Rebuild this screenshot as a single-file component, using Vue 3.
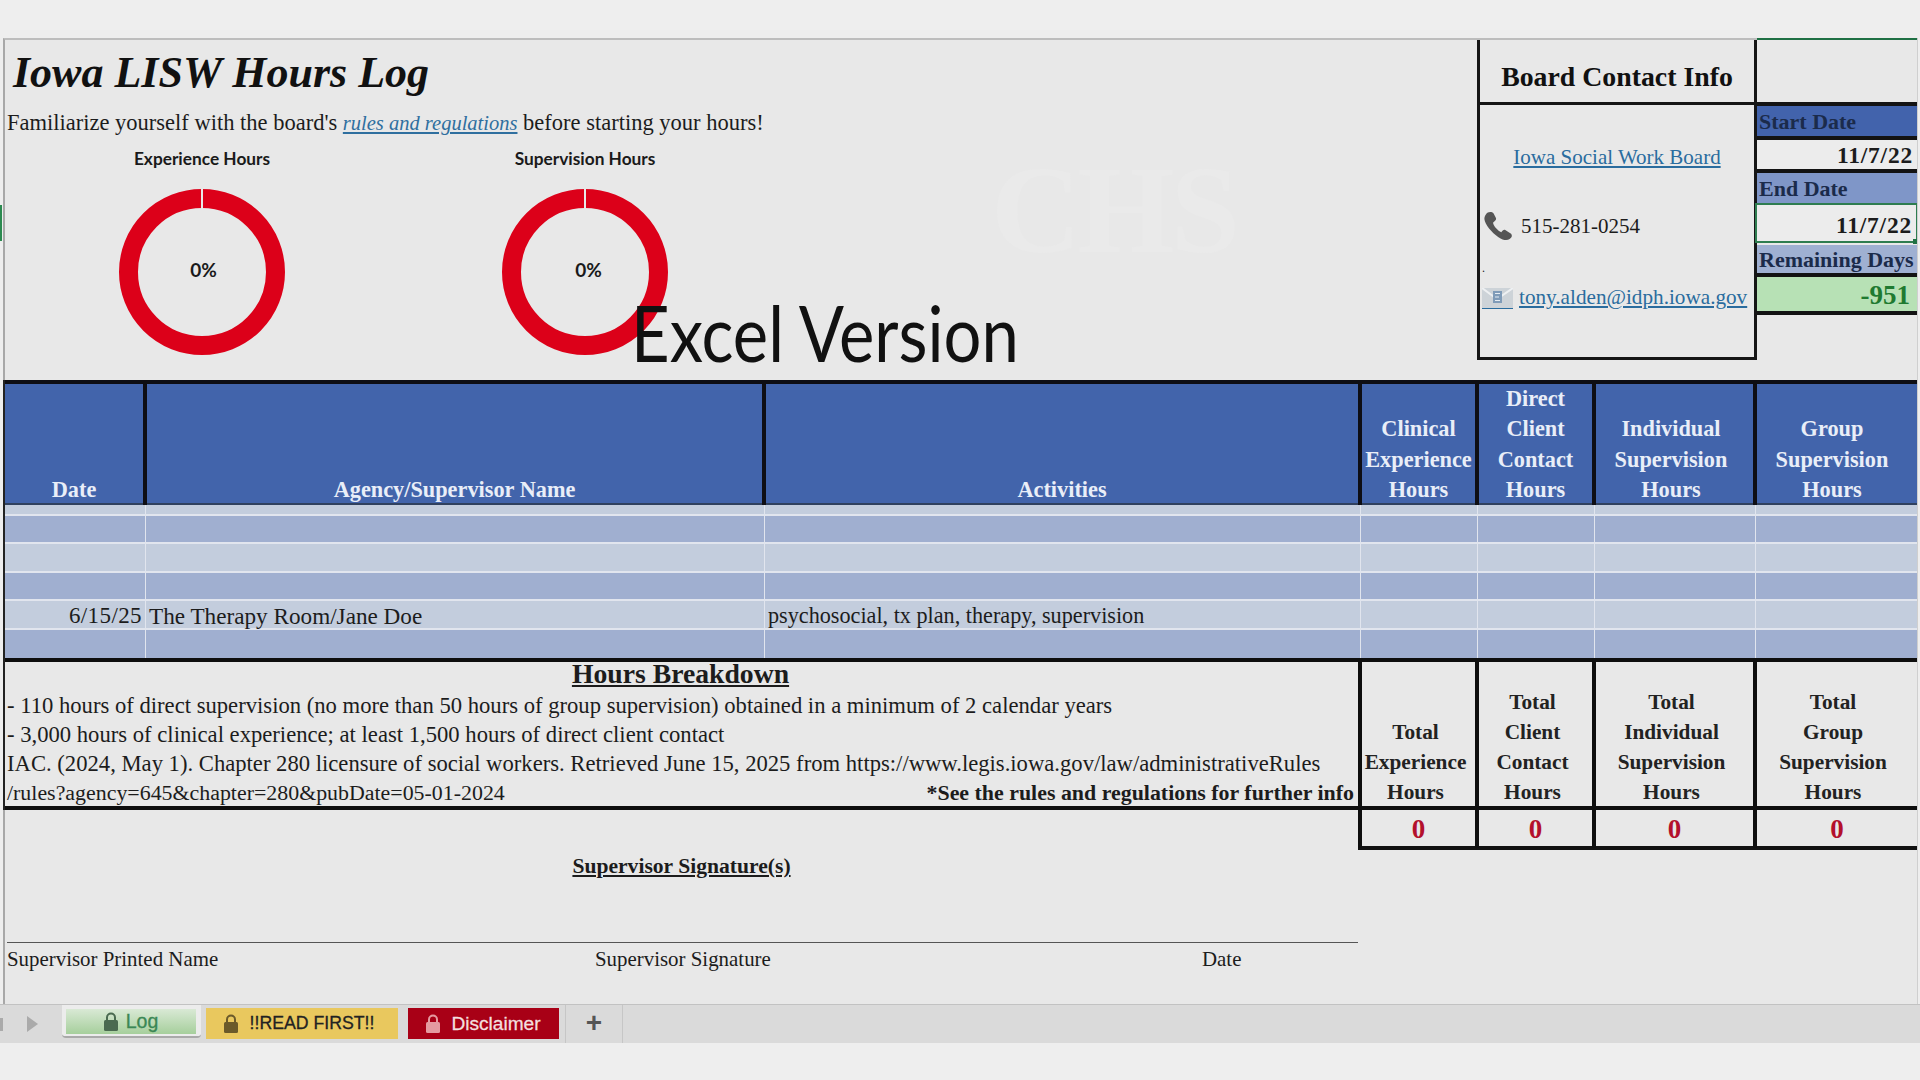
<template>
  <div class="page">
    <div class="top-strip"></div>
    <div class="row-marker"></div>

    <div class="sheet">
      <div class="excel-label">Excel Version</div>
      <div class="watermark">CHS</div>

      <!-- top part: title, charts, contact box, dates -->
      <div class="top-section">
        <div class="intro">
          <h1 class="title">Iowa LISW Hours Log</h1>
          <p class="subtitle">
            Familiarize yourself with the board's
            <a class="rules-link">rules and regulations</a>
            before starting your hours!
          </p>
          <div class="charts">
            <div v-for="chart in charts" :key="chart" class="chart">
              <div class="chart-title">{{ chart }}</div>
              <div class="donut">
                <svg width="170" height="170" viewBox="0 0 170 170">
                  <circle cx="85" cy="85" r="73.5" fill="none" stroke="#dc0019" stroke-width="19" />
                  <rect x="84" y="0" width="2" height="24" fill="#e8e8e8" />
                </svg>
                <span class="donut-value">0%</span>
              </div>
            </div>
          </div>
        </div>

        <div class="contact">
          <div class="contact-head">Board Contact Info</div>
          <div class="contact-body">
            <a class="link board-link">Iowa Social Work Board</a>
            <div class="phone-row">
              <svg class="phone-icon" width="31" height="32" viewBox="0 0 32 32">
                <path fill="#555" d="M4 4C6 1 10 1 12 3L14.5 8C15 10 13 11 11.5 12.500C11 15 16 21 20 22.500C21 20.500 22.500 19.500 24 20L30 24C31.500 25.500 31 28 28.500 29.500C26 31 22 31 17 27.500C10 23 3 14 2.500 9C2.300 7 3 5.500 4 4Z" />
              </svg>
              <span>515-281-0254</span>
            </div>
            <div class="dot-row">.</div>
            <div class="mail-row">
              <svg class="mail-icon" width="31" height="20" viewBox="0 0 31 20">
                <rect x="0" y="0" width="31" height="20" fill="#cdd3d8" />
                <path d="M0 0L15 11L31 0" fill="none" stroke="#eef0f2" stroke-width="2" />
                <rect x="11" y="3" width="9" height="12" fill="#7f9bb8" />
                <path d="M13 5.500H18M13 9H17M13 12.500H18" stroke="#e6edf3" stroke-width="1.200" />
              </svg>
              <a class="link">tony.alden@idph.iowa.gov</a>
            </div>
          </div>
        </div>

        <div class="dates">
          <div class="band band-start">Start Date</div>
          <div class="date-cell">11/7/22</div>
          <div class="band band-end">End Date</div>
          <div class="date-cell date-selected">
            11/7/22
            <span class="fill-handle"></span>
          </div>
          <div class="band band-left">Remaining Days</div>
          <div class="date-cell date-left">-951</div>
        </div>
      </div>

      <!-- log table -->
      <div class="log">
        <div class="log-head">
          <div v-for="col in columns" :key="col.join()" class="head-cell">
            <span v-for="line in col" :key="line">{{ line }}</span>
          </div>
        </div>

        <div v-for="(row, i) in rows" :key="i" class="log-row" :class="row.cls">
          <div class="cell cell-date">{{ row.date }}</div>
          <div class="cell cell-agency">{{ row.agency }}</div>
          <div class="cell">{{ row.activities }}</div>
          <div class="cell"></div>
          <div class="cell"></div>
          <div class="cell"></div>
          <div class="cell"></div>
        </div>

        <div class="breakdown">
          <div class="breakdown-text">
            <div class="breakdown-head">Hours Breakdown</div>
            <div class="line">- 110 hours of direct supervision (no more than 50 hours of group supervision) obtained in a minimum of 2 calendar years</div>
            <div class="line">- 3,000 hours of clinical experience; at least 1,500 hours of direct client contact</div>
            <div class="line">IAC. (2024, May 1). Chapter 280 licensure of social workers. Retrieved June 15, 2025 from https://www.legis.iowa.gov/law/administrativeRules</div>
            <div class="line line-split">
              <span>/rules?agency=645&amp;chapter=280&amp;pubDate=05-01-2024</span>
              <b>*See the rules and regulations for further info</b>
            </div>
          </div>
          <div v-for="col in totals" :key="col.join()" class="total-head">
            <span v-for="line in col" :key="line">{{ line }}</span>
          </div>
        </div>

        <div class="lower">
          <div class="signature">
            <div class="signature-head">Supervisor Signature(s)</div>
            <div class="signature-labels">
              <span>Supervisor Printed Name</span>
              <span>Supervisor Signature</span>
              <span>Date</span>
            </div>
          </div>
          <div class="total-values">
            <div v-for="col in totals" :key="col.join()" class="total-value">0</div>
          </div>
        </div>
      </div>
    </div>

    <div class="tabbar">
      <div class="tab-nav">
        <span class="nav-prev"></span>
        <span class="nav-next"></span>
      </div>
      <div class="tab-active">
        <div class="tab tab-log">
          <svg class="lock" width="14" height="19" viewBox="0 0 14 19">
            <path d="M3 8V5.500a4 4 0 0 1 8 0V8" fill="none" stroke="currentColor" stroke-width="2" />
            <rect x="0" y="8" width="14" height="11" rx="1.500" fill="currentColor" />
          </svg>
          <span>Log</span>
        </div>
      </div>
      <div class="tab tab-read">
        <svg class="lock" width="14" height="19" viewBox="0 0 14 19">
          <path d="M3 8V5.500a4 4 0 0 1 8 0V8" fill="none" stroke="currentColor" stroke-width="2" />
          <rect x="0" y="8" width="14" height="11" rx="1.500" fill="currentColor" />
        </svg>
        <span>!!READ FIRST!!</span>
      </div>
      <div class="tab tab-disclaimer">
        <svg class="lock" width="14" height="19" viewBox="0 0 14 19">
          <path d="M3 8V5.500a4 4 0 0 1 8 0V8" fill="none" stroke="currentColor" stroke-width="2" />
          <rect x="0" y="8" width="14" height="11" rx="1.500" fill="currentColor" />
        </svg>
        <span>Disclaimer</span>
      </div>
      <div class="tab-add">+</div>
    </div>
  </div>
</template>

<script setup>
const charts = ['Experience Hours', 'Supervision Hours']

const columns = [
  ['Date'],
  ['Agency/Supervisor Name'],
  ['Activities'],
  ['Clinical', 'Experience', 'Hours'],
  ['Direct', 'Client', 'Contact', 'Hours'],
  ['Individual', 'Supervision', 'Hours'],
  ['Group', 'Supervision', 'Hours']
]

const rows = [
  { cls: 'row-first' },
  { cls: 'row-dark' },
  { cls: 'row-light' },
  { cls: 'row-dark' },
  {
    cls: 'row-light',
    date: '6/15/25',
    agency: 'The Therapy Room/Jane Doe',
    activities: 'psychosocial, tx plan, therapy, supervision'
  },
  { cls: 'row-dark row-last' }
]

const totals = [
  ['Total', 'Experience', 'Hours'],
  ['Total', 'Client', 'Contact', 'Hours'],
  ['Total', 'Individual', 'Supervision', 'Hours'],
  ['Total', 'Group', 'Supervision', 'Hours']
]
</script>

<style>
html,
body {
  margin: 0;
  background: #eeeeee;
}
</style>

<style scoped>
.page {
  position: relative;
  width: 1920px;
  height: 1080px;
  overflow: hidden;
  background: #eeeeee;
  font-family: "Liberation Serif", "Times New Roman", serif;
  font-size: 21px;
  color: #1c1c1c;
}

.top-strip {
  height: 38px;
}

.row-marker {
  position: absolute;
  left: 0;
  top: 205px;
  width: 2px;
  height: 36px;
  background: #2c8a50;
}

.sheet {
  position: relative;
  height: 964px;
  margin-left: 3px;
  margin-right: 2px;
  background: #e8e8e8;
  border-top: 2px solid #bdbdbd;
  border-left: 2px solid #a8a8a8;
  border-right: 1px solid #cfcfcf;
}

.excel-label {
  position: absolute;
  left: 626px;
  top: 250px;
  font-family: Lato, sans-serif;
  font-size: 70px;
  line-height: 84px;
  color: #111;
  white-space: nowrap;
  transform-origin: left center;
  transform: scale(0.956, 1.1);
  z-index: 2;
}

.watermark {
  position: absolute;
  left: 986px;
  top: 100px;
  font-size: 125px;
  font-weight: 700;
  letter-spacing: -4px;
  line-height: 140px;
  color: #eaeaea;
}

.top-section {
  display: flex;
  height: 340px;
}

.intro {
  position: relative;
  flex: 1;
  min-width: 0;
}

.title {
  margin: 7px 0 0 8px;
  font-size: 44px;
  line-height: 52px;
  font-style: italic;
  font-weight: 700;
  color: #111;
}

.subtitle {
  margin: 10px 0 0 2px;
  font-size: 22.500px;
  line-height: 28px;
  white-space: nowrap;
}

.rules-link {
  font-size: 20.500px;
  font-style: italic;
  color: #2f6f9f;
  text-decoration: underline;
}

.charts {
  display: flex;
  gap: 123px;
  margin-top: 11px;
  padding-left: 67px;
}

.chart {
  width: 260px;
  display: flex;
  flex-direction: column;
  align-items: center;
}

.chart-title {
  font-family: Lato, sans-serif;
  font-size: 17.300px;
  font-weight: 700;
  line-height: 22px;
  color: #1a1a1a;
}

.donut {
  position: relative;
  width: 170px;
  height: 170px;
  margin-top: 17px;
}

.donut svg {
  display: block;
}

.donut-value {
  position: absolute;
  inset: 0;
  display: flex;
  align-items: center;
  justify-content: center;
  padding-left: 3px;
  padding-bottom: 6px;
  font-family: Lato, sans-serif;
  font-size: 19px;
  font-weight: 700;
  color: #1a1a1a;
}

.chart:last-child .donut-value {
  padding-left: 7px;
}

.contact {
  width: 280px;
  height: 320px;
  border-left: 3px solid #151515;
  border-right: 3px solid #151515;
  border-bottom: 3px solid #151515;
  box-sizing: border-box;
}

.contact-head {
  height: 65px;
  box-sizing: border-box;
  border-bottom: 3px solid #151515;
  padding-top: 20px;
  text-align: center;
  font-size: 27.800px;
  line-height: 34px;
  font-weight: 700;
  color: #111;
}

.contact-body {
  padding: 0 2px;
}

.link {
  color: #2a6c9e;
  text-decoration: underline;
}

.board-link {
  display: block;
  margin-top: 39px;
  text-align: center;
  font-size: 21px;
  line-height: 26px;
}

.phone-row {
  display: flex;
  align-items: center;
  gap: 8px;
  margin-top: 40px;
  font-size: 21px;
}

.dot-row {
  height: 14px;
  margin-top: 19px;
  font-size: 12px;
  line-height: 14px;
}

.mail-row {
  display: flex;
  align-items: flex-end;
  gap: 6px;
  margin-top: 10px;
  font-size: 21.200px;
  line-height: 24px;
  white-space: nowrap;
}

.mail-icon {
  border-bottom: 1px solid #2a6c9e;
}

.dates {
  width: 160px;
  margin-top: -2px;
  padding-top: 62px;
  border-top: 2px solid #1f7044;
  font-size: 22px;
  font-weight: 700;
}

.band {
  height: 30px;
  padding-left: 2px;
  line-height: 32px;
  white-space: nowrap;
  color: #1b2b4b;
  border-top: 4px solid #131313;
}

.band-start {
  background: #4263ac;
}

.band-end {
  background: #7f96c8;
}

.band-left {
  margin-top: 2px;
  height: 28px;
  line-height: 30px;
  border-top: 0;
  background: #9fb0d2;
}

.date-cell {
  height: 29px;
  padding-right: 4px;
  border-top: 4px solid #131313;
  text-align: right;
  font-size: 23.500px;
  letter-spacing: 0.800px;
  line-height: 31px;
  background: #ececec;
}

.date-selected {
  position: relative;
  height: 36px;
  margin-left: -2px;
  border: 2px solid #2e7d50;
  border-right-width: 1px;
  line-height: 41px;
  padding-right: 4px;
}

.fill-handle {
  position: absolute;
  right: -1px;
  bottom: -3px;
  width: 4px;
  height: 5px;
  background: #1f7044;
}

.date-left {
  height: 34px;
  line-height: 36px;
  font-size: 27px;
  letter-spacing: 0;
  padding-right: 7px;
  color: #1f7a30;
  background: #b7e1b5;
  border-bottom: 4px solid #131313;
}

/* table */
.log {
  box-shadow: -2px 0 0 #222;
  height: 430px;
}

.log-head,
.breakdown {
  display: grid;
  grid-template-columns: 138px 619px 596px 117px 117px 161px 164px;
}

.log-row {
  display: grid;
  grid-template-columns: 140px 619px 596px 117px 117px 161px 162px;
}

.log-head {
  height: 119px;
  border-top: 4px solid #0e0e14;
  border-bottom: 2px solid #30415f;
  background: #4264ab;
}

.head-cell {
  display: flex;
  flex-direction: column;
  justify-content: flex-end;
  align-items: center;
  margin-bottom: -1px;
  border-left: 4px solid #0e0e14;
  font-size: 22.300px;
  line-height: 30.300px;
  font-weight: 700;
  color: #e9eef8;
  white-space: nowrap;
}

.head-cell:first-child {
  border-left: 0;
}

.head-cell:nth-child(6) {
  padding-right: 7px;
}

.head-cell:nth-child(7) {
  padding-right: 10px;
}

.log-row {
  height: 28.500px;
  box-sizing: border-box;
  border-bottom: 2px solid #e1e5ee;
}

.row-first {
  height: 10.500px;
  background: #c3cddd;
}

.row-dark {
  background: #a0afd0;
}

.row-light {
  background: #c3cddd;
}

.row-last {
  border-bottom: 0;
}

.cell {
  box-sizing: border-box;
  padding: 0 3px;
  border-left: 1px solid #e1e5ee;
  font-size: 22.200px;
  line-height: 30px;
  white-space: nowrap;
}

.cell:first-child {
  border-left: 0;
}

.cell-date {
  text-align: right;
  font-size: 23px;
  letter-spacing: 0.400px;
}

.cell-agency {
  font-size: 23.200px;
}

.breakdown {
  height: 144px;
  grid-template-rows: 144px;
  border-top: 4px solid #0e0e0e;
  border-bottom: 4px solid #0e0e0e;
}

.breakdown-text {
  grid-column: 1 / 4;
  padding: 0 4px 0 2px;
  font-size: 22.650px;
  line-height: 29px;
  white-space: nowrap;
}

.breakdown-head {
  height: 29px;
  text-align: center;
  font-size: 27.700px;
  line-height: 24px;
  font-weight: 700;
  text-decoration: underline;
}

.line-split {
  display: flex;
  justify-content: space-between;
  font-size: 21.900px;
}

.total-head {
  display: flex;
  flex-direction: column;
  justify-content: flex-end;
  align-items: center;
  margin-bottom: -1px;
  padding-right: 6px;
  border-left: 4px solid #0e0e0e;
  font-size: 21.300px;
  line-height: 30px;
  font-weight: 700;
  color: #222;
  white-space: nowrap;
}

.total-head:last-child {
  padding-right: 8px;
}

.lower {
  display: grid;
  grid-template-columns: 1353px 559px;
}

.signature-head {
  margin-top: 42px;
  text-align: center;
  font-size: 21.600px;
  line-height: 28px;
  font-weight: 700;
  text-decoration: underline;
}

.signature-labels {
  display: grid;
  grid-template-columns: 588px 607px 156px;
  margin: 62px 0 0 2px;
  padding-top: 3px;
  border-top: 1px solid #555;
  font-size: 20.900px;
  line-height: 26px;
  white-space: nowrap;
}

.total-values {
  display: grid;
  grid-template-columns: 117px 117px 161px 164px;
  height: 36px;
  border-bottom: 4px solid #111;
}

.total-value {
  border-left: 4px solid #0e0e0e;
  text-align: center;
  font-size: 27px;
  line-height: 38px;
  font-weight: 700;
  color: #b3102c;
}

/* sheet tabs */
.tabbar {
  display: flex;
  align-items: flex-start;
  height: 39px;
  background: #dadada;
  border-top: 1px solid #c2c2c2;
  box-sizing: border-box;
  font-family: "Liberation Sans", Arial, sans-serif;
  font-size: 18.500px;
}

.tab-nav {
  display: flex;
  align-items: center;
  justify-content: space-between;
  width: 38px;
  height: 38px;
  padding-right: 24px;
}

.nav-prev {
  width: 3px;
  height: 13px;
  background: #aaa;
}

.nav-next {
  width: 0;
  height: 0;
  border-left: 11px solid #aaa;
  border-top: 8px solid transparent;
  border-bottom: 8px solid transparent;
}

.tab-active {
  width: 139px;
  height: 33px;
  padding: 4px 5px 0 4px;
  box-sizing: border-box;
  background: #ececec;
  border-bottom: 2px solid #a9a9a9;
  border-radius: 0 0 4px 4px;
}

.tab {
  display: flex;
  align-items: center;
  justify-content: center;
  gap: 8px;
  box-sizing: border-box;
  -webkit-text-stroke: 0.3px currentColor;
}

.tab-log {
  height: 25px;
  font-size: 19.500px;
  background: linear-gradient(#d9e9d5, #a6cf9c);
  color: #3b8755;
}

.tab-log .lock {
  color: #4a6a50;
}

.tab-read {
  width: 192px;
  height: 31px;
  margin: 3px 0 0 5px;
  padding-right: 6px;
  gap: 12px;
  font-size: 17.700px;
  background: #e9c85e;
  color: #222;
}

.tab-read .lock {
  color: #6b5a2a;
}

.tab-disclaimer {
  width: 151px;
  height: 31px;
  margin: 3px 0 0 10px;
  gap: 11px;
  font-size: 19.100px;
  background: #a80016;
  color: #f3dfdf;
}

.tab-disclaimer .lock {
  color: #e59aa0;
}

.tab-add {
  width: 56px;
  height: 38px;
  margin-left: 6px;
  border-left: 1px solid #c6c6c6;
  border-right: 1px solid #c6c6c6;
  text-align: center;
  font-size: 28px;
  line-height: 36px;
  font-weight: 700;
  color: #555;
}
</style>
